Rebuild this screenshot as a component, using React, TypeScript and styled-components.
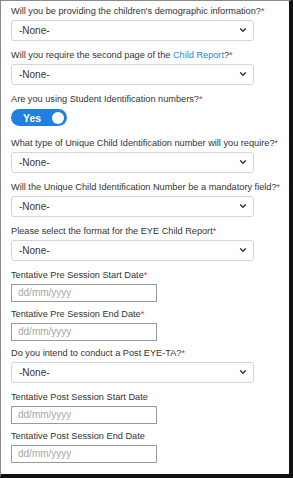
import React from "react";
import styled, { createGlobalStyle } from "styled-components";
import { ChevronDown } from "lucide-react";

const GlobalStyle = createGlobalStyle`
  html, body {
    margin: 0;
    padding: 0;
    background: #ffffff;
  }
  * {
    box-sizing: border-box;
  }
`;

const Frame = styled.div`
  width: 293px;
  height: 478px;
  border-top: 1px solid #8a8a8a;
  border-left: 1px solid #8a8a8a;
  border-right: 4px solid #111111;
  border-bottom: 4px solid #111111;
  background: #ffffff;
  overflow: hidden;
  font-family: "Liberation Sans", Arial, sans-serif;
`;

const Form = styled.div`
  display: flex;
  flex-direction: column;
  padding: 4px 0 0 10px;
`;

const Field = styled.div<{ $kind: string }>`
  display: flex;
  flex-direction: column;
  align-items: flex-start;
  margin-bottom: ${(p) => (p.$kind === "toggle" ? "11px" : p.$kind === "date" ? "6.5px" : "8.5px")};
`;

const Label = styled.div`
  font-size: 9.2px;
  line-height: 12px;
  color: #333333;
  white-space: nowrap;
`;

const Required = styled.span`
  color: #e3262f;
`;

const ReportLink = styled.a`
  color: #1f8ad6;
  text-decoration: none;
`;

const SelectWrap = styled.div`
  position: relative;
  margin-top: 3px;
  width: 243px;
`;

const Select = styled.select`
  appearance: none;
  -webkit-appearance: none;
  display: block;
  width: 100%;
  height: 20.5px;
  padding: 0 20px 0 7px;
  border: 1px solid #d4d4d4;
  border-radius: 3px;
  background: #ffffff;
  font-family: "Liberation Sans", Arial, sans-serif;
  font-size: 10px;
  color: #333333;
  outline: none;
`;

const Chevron = styled.span`
  position: absolute;
  right: 6px;
  top: 50%;
  transform: translateY(-50%);
  display: flex;
  color: #333333;
  pointer-events: none;
`;

const DateInput = styled.input`
  margin-top: 2.5px;
  width: 146px;
  height: 18px;
  padding: 0 6px;
  border: 1px solid #9a9a9a;
  border-radius: 0;
  font-family: "Liberation Sans", Arial, sans-serif;
  font-size: 10px;
  color: #333333;
  outline: none;

  &::placeholder {
    color: #a6a6a6;
  }
`;

const Toggle = styled.button`
  margin-top: 4px;
  width: 56px;
  height: 17px;
  border: none;
  border-radius: 9px;
  background: #1f80e2;
  display: flex;
  align-items: center;
  justify-content: space-between;
  padding: 0 3px 0 12px;
  cursor: pointer;
`;

const ToggleText = styled.span`
  color: #ffffff;
  font-family: "Liberation Sans", Arial, sans-serif;
  font-weight: bold;
  font-size: 10.5px;
`;

const Knob = styled.span`
  width: 12px;
  height: 12px;
  border-radius: 50%;
  background: #ffffff;
`;

type Question = {
  kind: "select" | "date" | "toggle";
  label: React.ReactNode;
  required?: boolean;
};

const questions: Question[] = [
  { kind: "select", label: "Will you be providing the children's demographic information?", required: true },
  {
    kind: "select",
    label: (
      <>
        Will you require the second page of the <ReportLink href="#">Child Report</ReportLink>?
      </>
    ),
    required: true,
  },
  { kind: "toggle", label: "Are you using Student Identification numbers?", required: true },
  { kind: "select", label: "What type of Unique Child Identification number will you require?", required: true },
  { kind: "select", label: "Will the Unique Child Identification Number be a mandatory field?", required: true },
  { kind: "select", label: "Please select the format for the EYE Child Report", required: true },
  { kind: "date", label: "Tentative Pre Session Start Date", required: true },
  { kind: "date", label: "Tentative Pre Session End Date", required: true },
  { kind: "select", label: "Do you intend to conduct a Post EYE-TA?", required: true },
  { kind: "date", label: "Tentative Post Session Start Date" },
  { kind: "date", label: "Tentative Post Session End Date" },
];

export default function App() {
  return (
    <>
      <GlobalStyle />
      <Frame>
        <Form>
          {questions.map((q, i) => (
            <Field key={i} $kind={q.kind}>
              <Label>
                {q.label}
                {q.required && <Required>*</Required>}
              </Label>
              {q.kind === "select" && (
                <SelectWrap>
                  <Select defaultValue="none">
                    <option value="none">-None-</option>
                  </Select>
                  <Chevron>
                    <ChevronDown size={10} strokeWidth={3.2} />
                  </Chevron>
                </SelectWrap>
              )}
              {q.kind === "date" && <DateInput type="text" placeholder="dd/mm/yyyy" />}
              {q.kind === "toggle" && (
                <Toggle type="button">
                  <ToggleText>Yes</ToggleText>
                  <Knob />
                </Toggle>
              )}
            </Field>
          ))}
        </Form>
      </Frame>
    </>
  );
}
